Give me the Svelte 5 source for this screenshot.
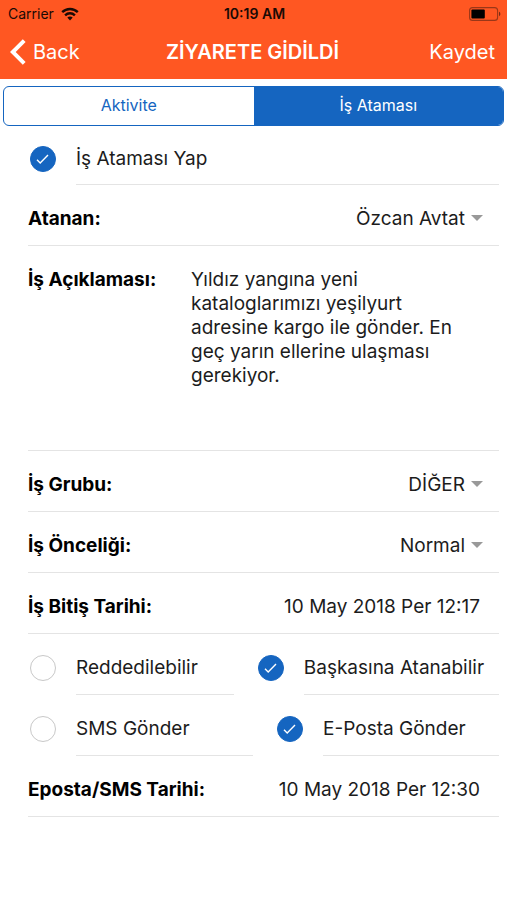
<script>
  let tab = 'assign';
  let assign = true;
  let assignee = 'Özcan Avtat';
  let description = 'Yıldız yangına yeni kataloglarımızı yeşilyurt adresine kargo ile gönder. En geç yarın ellerine ulaşması gerekiyor.';
  let group = 'DİĞER';
  let priority = 'Normal';
  let dueDate = '10 May 2018 Per 12:17';
  let notifyDate = '10 May 2018 Per 12:30';

  let optionRows = [
    [
      { id: 'rejectable', label: 'Reddedilebilir', checked: false },
      { id: 'reassignable', label: 'Başkasına Atanabilir', checked: true }
    ],
    [
      { id: 'sms', label: 'SMS Gönder', checked: false },
      { id: 'email', label: 'E-Posta Gönder', checked: true }
    ]
  ];
</script>

<div class="screen">
  <header>
    <div class="status-bar">
      <span class="carrier">
        Carrier
        <svg width="18" height="14" viewBox="0 0 18 14" fill="none" stroke="#1a0a05" stroke-width="2.4">
          <path d="M1.2 5.2C5.6 0.9 12.4 0.9 16.8 5.2"></path>
          <path d="M4.1 8.3C6.9 5.6 11.1 5.6 13.9 8.3"></path>
          <path d="M9 13.4L6.3 10.6C7.8 9.2 10.2 9.2 11.7 10.6Z" fill="#1a0a05" stroke="none"></path>
        </svg>
      </span>
      <span class="time">10:19 AM</span>
      <svg class="battery" width="32" height="14" viewBox="0 0 32 14">
        <rect x="0.6" y="0.6" width="28" height="12.8" rx="3" fill="none" stroke="#9a3718" stroke-width="1.1"></rect>
        <rect x="2.4" y="2.4" width="13.4" height="9.2" rx="1" fill="#000"></rect>
        <path d="M30 4.8C31.8 5.4 31.8 8.6 30 9.2Z" fill="#7a2b14"></path>
      </svg>
    </div>
    <nav>
      <button class="nav-btn back">
        <svg width="16" height="26" viewBox="0 0 16 26" fill="none" stroke="#fff" stroke-width="4">
          <path d="M14.2 1.6L2.8 13L14.2 24.4"></path>
        </svg>
        Back
      </button>
      <h1>ZİYARETE GİDİLDİ</h1>
      <button class="nav-btn save">Kaydet</button>
    </nav>
  </header>

  <div class="segment">
    <button class:active={tab === 'activity'} on:click={() => (tab = 'activity')}>Aktivite</button>
    <button class:active={tab === 'assign'} on:click={() => (tab = 'assign')}>İş Ataması</button>
  </div>

  <form on:submit|preventDefault>
    <div class="check-row">
      <div class="check">
        <span class="box">
          <input type="checkbox" id="assign" bind:checked={assign} />
          <svg viewBox="0 0 26 26" fill="none" stroke="#fff" stroke-width="1.4">
            <path d="M7 13.8L10.2 17L18 9"></path>
          </svg>
        </span>
        <label for="assign">İş Ataması Yap</label>
      </div>
    </div>

    <div class="row picker">
      <label for="assignee">Atanan:</label>
      <select id="assignee" bind:value={assignee}>
        <option>Özcan Avtat</option>
      </select>
      <span class="caret"></span>
    </div>

    <div class="row note">
      <label for="description">İş Açıklaması:</label>
      <textarea id="description" rows="7" spellcheck="false" bind:value={description}></textarea>
    </div>

    <div class="row picker">
      <label for="group">İş Grubu:</label>
      <select id="group" bind:value={group}>
        <option>DİĞER</option>
      </select>
      <span class="caret"></span>
    </div>

    <div class="row picker">
      <label for="priority">İş Önceliği:</label>
      <select id="priority" bind:value={priority}>
        <option>Normal</option>
      </select>
      <span class="caret"></span>
    </div>

    <div class="row">
      <label for="due">İş Bitiş Tarihi:</label>
      <button type="button" class="date" id="due">{dueDate}</button>
    </div>

    {#each optionRows as options}
      <div class="check-row">
        {#each options as option (option.id)}
          <div class="check">
            <span class="box">
              <input type="checkbox" id={option.id} bind:checked={option.checked} />
              <svg viewBox="0 0 26 26" fill="none" stroke="#fff" stroke-width="1.4">
                <path d="M7 13.8L10.2 17L18 9"></path>
              </svg>
            </span>
            <label for={option.id}>{option.label}</label>
          </div>
        {/each}
      </div>
    {/each}

    <div class="row">
      <label for="notify">Eposta/SMS Tarihi:</label>
      <button type="button" class="date" id="notify">{notifyDate}</button>
    </div>
  </form>
</div>

<style>
  :global(body) {
    background: #fff;
  }

  .screen {
    font-family: Inter, Roboto, "Liberation Sans", sans-serif;
    font-size: 19px;
    color: #1c1c1c;
  }

  button,
  select,
  textarea {
    font: inherit;
    color: inherit;
    background: none;
    border: none;
    border-radius: 0;
    margin: 0;
    padding: 0;
  }

  button,
  select {
    cursor: pointer;
  }

  header {
    background: #ff5722;
  }

  .status-bar {
    display: grid;
    grid-template-columns: 1fr auto 1fr;
    align-items: center;
    height: 27px;
    padding: 0 6px 0 8px;
    font-size: 14px;
    color: #1a0a05;
  }

  .carrier {
    display: flex;
    align-items: center;
    gap: 7px;
  }

  .time {
    font-weight: 600;
  }

  .battery {
    justify-self: end;
  }

  nav {
    display: grid;
    grid-template-columns: 1fr auto 1fr;
    align-items: center;
    height: 50px;
    padding: 0 12px 2px 10px;
    color: #fff;
  }

  .nav-btn {
    font-size: 20px;
  }

  .back {
    display: flex;
    align-items: center;
    gap: 7px;
    justify-self: start;
  }

  .save {
    justify-self: end;
  }

  h1 {
    margin: 0;
    font-size: 20px;
    font-weight: 600;
  }

  .segment {
    display: flex;
    height: 38px;
    margin: 7px 3px 0 3px;
    border: 1px solid #1565c0;
    border-radius: 6px;
    overflow: hidden;
  }

  .segment button {
    flex: 1;
    padding-bottom: 2px;
    font-size: 16px;
    color: #1565c0;
  }

  .segment .active {
    background: #1565c0;
    color: #fff;
  }

  form {
    padding: 0 8px 0 28px;
  }

  .row {
    display: flex;
    align-items: center;
    box-sizing: border-box;
    height: 61px;
    padding-top: 6px;
    padding-right: 19px;
    border-bottom: 1px solid #e4e4e4;
  }

  .row label {
    font-weight: 700;
    color: #000;
    white-space: nowrap;
  }

  .row select {
    flex: 1;
    min-width: 0;
    appearance: none;
    text-align-last: right;
  }

  .picker {
    padding-right: 16px;
  }

  .caret {
    margin-left: 6px;
    border: 6px solid transparent;
    border-top-color: #999;
    border-bottom: none;
  }

  .row .date {
    flex: 1;
    text-align: right;
  }

  .note {
    height: auto;
    align-items: flex-start;
    padding-top: 22px;
    padding-bottom: 14px;
    line-height: 24px;
  }

  .note label {
    flex: 0 0 163px;
  }

  .note textarea {
    flex: 1;
    min-width: 0;
    height: 168px;
    resize: none;
    outline: none;
    overflow: hidden;
  }

  .check-row {
    display: flex;
    gap: 24px;
    height: 61px;
  }

  .check-row:first-child {
    height: 59px;
  }

  .check {
    display: flex;
    flex: 3 1 auto;
    align-items: center;
    gap: 20px;
    padding-left: 2px;
  }

  .check + .check {
    flex-grow: 2;
    padding-left: 0;
  }

  .box {
    position: relative;
    width: 26px;
    height: 26px;
    padding-top: 6px;
  }

  .box input {
    appearance: none;
    display: block;
    width: 26px;
    height: 26px;
    margin: 0;
    border: 1px solid #c8c8c8;
    border-radius: 50%;
    cursor: pointer;
  }

  .box input:checked {
    background: #1565c0;
    border-color: #1565c0;
  }

  .box svg {
    position: absolute;
    inset: 6px 0 0;
    pointer-events: none;
  }

  .check label {
    flex: 1;
    display: flex;
    align-items: center;
    height: 100%;
    box-sizing: border-box;
    padding-top: 6px;
    padding-right: 27px;
    border-bottom: 1px solid #e4e4e4;
    white-space: nowrap;
  }

  .check + .check label {
    padding-right: 9px;
  }
</style>
